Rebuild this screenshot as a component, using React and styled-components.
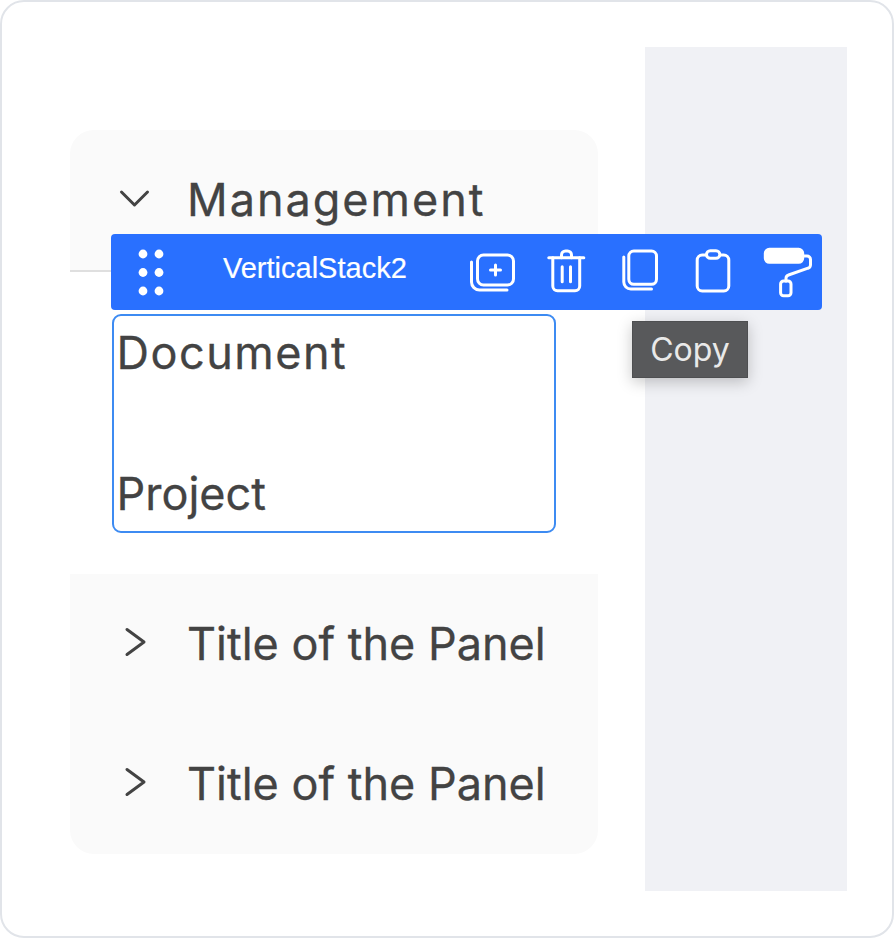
import React from "react";
import styled, { createGlobalStyle } from "styled-components";

const Global = createGlobalStyle`
  html, body { margin: 0; padding: 0; background: #fff; }
  * { box-sizing: border-box; }
`;

const Frame = styled.div`
  width: 894px;
  height: 938px;
  border: 2px solid #e1e4e9;
  border-radius: 24px;
  background: #fff;
  display: flex;
  align-items: flex-start;
  padding: 45px 45px 45px 68px;
  font-family: "Inter", "Noto Sans", sans-serif;
  color: #434343;
`;

const Sidebar = styled.div`
  position: relative;
  width: 528px;
  margin-top: 83px;
  flex: none;
`;

const Canvas = styled.div`
  width: 202px;
  height: 844px;
  margin-left: 47px;
  background: #f0f1f5;
  flex: none;
`;

const Row = styled.div`
  height: ${(p) => (p.$top ? "142px" : "140px")};
  display: flex;
  align-items: center;
  background: #fafafa;
  ${(p) => p.$top && "border-radius: 24px 24px 0 0; border-bottom: 2px solid #dfdfdf;"}
  ${(p) => p.$bottom && "border-radius: 0 0 24px 24px;"}
`;

const ChevronSlot = styled.span`
  width: 117px;
  padding-left: 48px;
  display: flex;
  flex: none;
`;

const Title = styled.span`
  font-size: 45px;
  line-height: 1;
  padding-bottom: 2px;
  letter-spacing: ${(p) => p.$spacing || 0}px;
  white-space: nowrap;
  -webkit-text-stroke: 0.3px #434343;
`;

const Body = styled.div`
  height: 302px;
  padding: 42px 0 0 42px;
  background: #fff;
`;

const Selected = styled.div`
  width: 444px;
  height: 219px;
  border: 2.5px solid #3d8bf2;
  border-radius: 9px;
  padding-left: 2.5px;
  display: flex;
  flex-direction: column;
  justify-content: space-between;
`;

const Item = styled.div`
  height: 76px;
  margin: -1px 0;
  padding-bottom: 2px;
  display: flex;
  align-items: center;
  font-size: 45px;
  letter-spacing: ${(p) => p.$spacing || 0}px;
  -webkit-text-stroke: 0.3px #434343;
`;

const Toolbar = styled.div`
  position: absolute;
  left: 41px;
  top: 104px;
  width: 711px;
  height: 76px;
  background: #2970ff;
  border-radius: 4px;
  display: flex;
  align-items: center;
  color: #fff;
  padding-right: 11.5px;
`;

const Grip = styled.svg`
  width: 30px;
  height: 48px;
  margin-left: 27px;
  flex: none;
`;

const Label = styled.span`
  margin-left: 55px;
  margin-top: -8px;
  font-family: "Liberation Sans", Arial, sans-serif;
  font-size: 29px;
  white-space: nowrap;
  -webkit-text-stroke: 0.2px #fff;
`;

const Actions = styled.div`
  margin-left: auto;
  display: flex;
  gap: 25.5px;
`;

const ActionIcon = styled.svg`
  width: 48px;
  height: 48px;
  display: block;
  fill: none;
  stroke: #fff;
  stroke-width: 3;
  stroke-linecap: round;
  stroke-linejoin: round;
  overflow: visible;
`;

const Tooltip = styled.div`
  position: absolute;
  left: 521px;
  top: 87px;
  width: 116px;
  height: 57px;
  background: #58595b;
  border: 1px solid #4e4f51;
  box-shadow: 0 4px 14px rgba(0, 0, 0, 0.22);
  color: #e9e9e9;
  font-size: 32px;
  display: flex;
  align-items: center;
  justify-content: center;
`;

const Chevron = ({ dir }) => (
  <svg width="32" height="32" viewBox="0 0 32 32" fill="none" stroke="#434343" strokeWidth="3" strokeLinecap="round" strokeLinejoin="round" style={{ overflow: "visible" }}>
    {dir === "down" ? <path d="M3.5 8 L16.5 21 L29.5 8" /> : <path d="M9 1.5 L26 14 L9 26.5" />}
  </svg>
);

const PanelRow = ({ bottom }) => (
  <Row $bottom={bottom}>
    <ChevronSlot>
      <Chevron dir="right" />
    </ChevronSlot>
    <Title>Title of the Panel</Title>
  </Row>
);

export default function App() {
  return (
    <>
      <Global />
      <Frame>
        <Sidebar>
          <Row $top>
            <ChevronSlot>
              <Chevron dir="down" />
            </ChevronSlot>
            <Title $spacing={2}>Management</Title>
          </Row>
          <Body>
            <Selected>
              <Item $spacing={1.5}>Document</Item>
              <Item>Project</Item>
            </Selected>
          </Body>
          <PanelRow />
          <PanelRow bottom />
          <Toolbar>
            <Grip viewBox="0 0 30 48" fill="#fff">
              {[5, 21].map((x) =>
                [6, 24.5, 43].map((y) => <circle key={`${x}-${y}`} cx={x} cy={y} r="4.4" />)
              )}
            </Grip>
            <Label>VerticalStack2</Label>
            <Actions>
              <ActionIcon viewBox="0 0 48 48">
                <rect x="8.5" y="7" width="36" height="30" rx="6" />
                <path d="M2.5 14 V34 a8 8 0 0 0 8 8 H38" />
                <path d="M26.5 17 V27 M21.5 22 H31.5" />
              </ActionIcon>
              <ActionIcon viewBox="0 0 48 48">
                <path d="M6.8 9.7 H41.8" />
                <path d="M10.8 9.7 V38 a4.7 4.7 0 0 0 4.7 4.7 H33 a4.7 4.7 0 0 0 4.7 -4.7 V9.7" />
                <path d="M19.5 9.7 V7 a4 4 0 0 1 4 -4 h2 a4 4 0 0 1 4 4 V9.7" />
                <path d="M20.2 18.7 V33.7 M28.5 18.7 V33.7" />
              </ActionIcon>
              <ActionIcon viewBox="0 0 48 48">
                <rect x="12.8" y="3" width="27.7" height="33.3" rx="5" />
                <path d="M7.8 9 V34 a7 7 0 0 0 7 7 H35.5" />
              </ActionIcon>
              <ActionIcon viewBox="0 0 48 48">
                <rect x="8.2" y="7" width="31.6" height="36" rx="5" />
                <rect x="17.5" y="2.7" width="13.3" height="7.6" rx="3.8" fill="#2970ff" />
              </ActionIcon>
              <ActionIcon viewBox="0 0 48 48">
                <rect x="2.3" y="1.3" width="37.4" height="13" rx="4" fill="#fff" />
                <path d="M41 8 H44 a3.5 3.5 0 0 1 3.5 3.5 V17 a3.5 3.5 0 0 1 -2.5 3.2 L25.5 27 a3.5 3.5 0 0 0 -2.5 3.2 V33" />
                <rect x="17.6" y="33" width="10.4" height="14.7" rx="3" />
              </ActionIcon>
            </Actions>
            <Tooltip>Copy</Tooltip>
          </Toolbar>
        </Sidebar>
        <Canvas />
      </Frame>
    </>
  );
}
